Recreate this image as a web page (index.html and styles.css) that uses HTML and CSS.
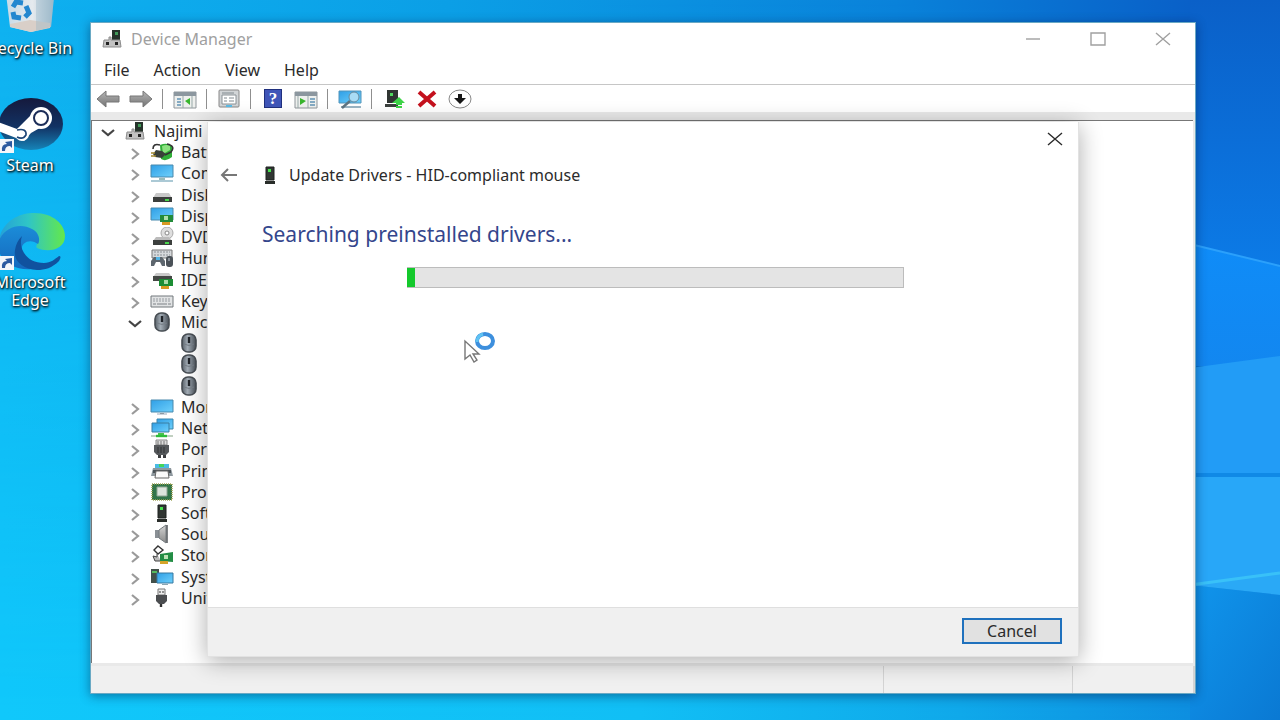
FILE: index.html
```html
<!DOCTYPE html>
<html lang="en">
<head>
<meta charset="utf-8">
<title>Device Manager</title>
<link rel="stylesheet" href="styles.css">
</head>
<body>
<svg class="defs" aria-hidden="true">
  <defs>
    <linearGradient id="gScreen" x1="0" y1="0" x2="1" y2="1"><stop offset="0" stop-color="#2f9fe6"/><stop offset="1" stop-color="#6fd0fb"/></linearGradient>
    <linearGradient id="gMouse" x1="0" x2="1"><stop offset="0" stop-color="#596169"/><stop offset=".4" stop-color="#a3adb6"/><stop offset="1" stop-color="#4a5159"/></linearGradient>
    <linearGradient id="gMetal" x1="0" y1="0" x2="0" y2="1"><stop offset="0" stop-color="#d5d5d5"/><stop offset="1" stop-color="#888"/></linearGradient>
    <linearGradient id="gSteam" x1="0" y1="0" x2="0" y2="1"><stop offset="0" stop-color="#15193c"/><stop offset=".55" stop-color="#123263"/><stop offset="1" stop-color="#1684b8"/></linearGradient>
    <linearGradient id="gEdgeTop" x1="0" y1=".5" x2="1" y2=".5"><stop offset="0" stop-color="#249fd9"/><stop offset=".45" stop-color="#2fc5c6"/><stop offset="1" stop-color="#64e84a"/></linearGradient>
    <linearGradient id="gEdgeMid" x1="0" y1="0" x2="0" y2="1"><stop offset="0" stop-color="#1b8cd8"/><stop offset="1" stop-color="#1568bd"/></linearGradient>
    <linearGradient id="gBin" x1="0" x2="1"><stop offset="0" stop-color="#c5d9e6"/><stop offset=".55" stop-color="#e5eaee"/><stop offset="1" stop-color="#9fb9c9"/></linearGradient>
    <linearGradient id="gArrow" x1="0" y1="0" x2="0" y2="1"><stop offset="0" stop-color="#b5b5b5"/><stop offset="1" stop-color="#747474"/></linearGradient>
  </defs>
  <symbol id="i-pc" viewBox="0 0 24 20"><path d="M12 1h8v10h-8z" fill="#26332b"/><path d="M15 3h3v3h-3z" fill="#3f9a58"/><path d="M4 11h5V8h2v3h9l1 7H3z" fill="#c2c2c2" stroke="#8c8c8c"/><path d="M6 13h3v3H6zM15 13h3v3h-3z" fill="#222"/></symbol>
  <symbol id="i-battery" viewBox="0 0 24 20"><path d="M10 3q7-3 12 1v11q-6 5-11 2z" fill="#2fae37"/><path d="M12 4q5-2 8 0v4l-7 4z" fill="#8be27f"/><path d="M3 7q0-6 7-4M17 2q9 2 4 8l-6 3" fill="none" stroke="#333" stroke-width="1.6"/><path d="M6 8l6 1 4 3-4 4-7-1-2-3z" fill="#39403a"/><path d="M1 11h4M1 14h5" stroke="#a48a32" stroke-width="1.6"/></symbol>
  <symbol id="i-monitor" viewBox="0 0 24 20"><path d="M1 3h22v12H1z" fill="url(#gScreen)" stroke="#4889ad"/><path d="M10 16h4v1h-4z" fill="#888"/><path d="M7 17h10" stroke="#9ab"/></symbol>
  <symbol id="i-computer" viewBox="0 0 24 20"><path d="M1 2h22v12H1z" fill="url(#gScreen)" stroke="#4889ad"/><path d="M9 15h6v2H9z" fill="#9bb"/><path d="M1 18h22" stroke="#8fb7c7" stroke-width="1.5"/></symbol>
  <symbol id="i-disk" viewBox="0 0 24 20"><path d="M6 8h13l3 5H3z" fill="#c9c9c9"/><path d="M3 12h19v5H3z" fill="#3c3f3d"/><path d="M15 15h4" stroke="#48d64c" stroke-width="2"/></symbol>
  <symbol id="i-display" viewBox="0 0 24 20"><path d="M1 2h22v12H1z" fill="url(#gScreen)" stroke="#4889ad"/><path d="M10 9h13v7H10z" fill="#238b3a"/><path d="M14 10h4v4h-4z" fill="#aee0aa"/><path d="M12 16h8v3h-8z" fill="#d89a22"/></symbol>
  <symbol id="i-dvd" viewBox="0 0 24 20"><circle cx="17" cy="6" r="6" fill="#dedede" stroke="#aaa"/><circle cx="17" cy="6" r="2" fill="#fff" stroke="#888"/><path d="M6 10h13l3 4H3z" fill="#bbb"/><path d="M3 13h19v5H3z" fill="#3c3f3d"/><path d="M15 16h4" stroke="#48d64c" stroke-width="2"/></symbol>
  <symbol id="i-hid" viewBox="0 0 24 20"><path d="M2 2h20v8H2z" fill="#d6d9dc" stroke="#777"/><path d="M4 4h16M4 7h16" stroke="#8a8f94" stroke-dasharray="2 1"/><path d="M1 18v-5l3-4h8l3 4v5h-3l-2-4H6l-2 4z" fill="#5d666e"/><path d="M6 9h4v3H6z" fill="#54b5e5"/><rect x="16" y="8" width="7" height="11" rx="3" fill="#4a5158"/><path d="M19 10v3" stroke="#c7d0d8"/></symbol>
  <symbol id="i-ide" viewBox="0 0 24 20"><path d="M6 3h13l3 4H3z" fill="#cacaca"/><path d="M3 6h19v5H3z" fill="#444845"/><path d="M9 9h14v7H9z" fill="#1c8d34"/><path d="M14 10h4v4h-4z" fill="#a9dba6"/><path d="M11 16h8v3h-8z" fill="#d89a22"/></symbol>
  <symbol id="i-keyboard" viewBox="0 0 24 20"><path d="M1 5h22v11H1z" fill="#e1e3e4" stroke="#73787c"/><path d="M3 8h18M3 10h18" stroke="#969ba0" stroke-dasharray="2 1"/><path d="M3 13h3m1 0h10m1 0h3" stroke="#7c8186"/></symbol>
  <symbol id="i-mouse" viewBox="0 0 24 20"><rect x="5" y="1" width="14" height="18" rx="6" fill="url(#gMouse)" stroke="#474d53" stroke-width="1.6"/><path d="M12 4v6" stroke="#1f2328" stroke-width="2.4"/><path d="M7 11q5 3 10 0" fill="none" stroke="#777f87"/></symbol>
  <symbol id="i-network" viewBox="0 0 24 20"><path d="M7 1h16v10H7z" fill="url(#gScreen)" stroke="#3b86ad"/><path d="M2 5h17v9H2z" fill="url(#gScreen)" stroke="#3b7ea3"/><path d="M8 15h6v2H8z" fill="#49c24e"/><path d="M1 18h22" stroke="#c1d0c1" stroke-width="2"/><path d="M6 18h11" stroke="#2dbd39" stroke-width="2.4"/></symbol>
  <symbol id="i-port" viewBox="0 0 24 20"><path d="M6 1h11v5H6z" fill="#ddd" stroke="#888"/><path d="M8 2v4m3-4v4m3-4v4" stroke="#777"/><path d="M4 6h15v7l-3 3H7l-3-3z" fill="#55585b"/><path d="M8 8v6m3-6v6m3-6v6" stroke="#303234"/><path d="M8 16h3v3H8zm5 0h3v3h-3z" fill="#3c3e40"/></symbol>
  <symbol id="i-printer" viewBox="0 0 24 20"><path d="M5 3h14v5H5z" fill="#4bbbe5"/><path d="M9 3h5v3H9z" fill="#43d45b"/><path d="M3 7h18l2 8H1z" fill="#8e989e"/><path d="M3 9h18v3H3z" fill="#4a5257"/><path d="M6 10h12l1 7H5z" fill="#fafafa" stroke="#666"/></symbol>
  <symbol id="i-cpu" viewBox="0 0 24 20"><path d="M2 2h20v16H2z" fill="#2d6e40" stroke="#a0a65a" stroke-width="1.6" stroke-dasharray="1 1"/><path d="M3 3h18v14H3z" fill="#32754a"/><path d="M7 5h10v9H7z" fill="#dce4dc" stroke="#8fa694"/></symbol>
  <symbol id="i-tower" viewBox="0 0 24 20"><path d="M8 2h8v13H8z" fill="#303532" stroke="#1d201e"/><path d="M10 4h3v3h-3z" fill="#45e04c"/><path d="M7 16h10v3H7z" fill="#292d2a"/></symbol>
  <symbol id="i-sound" viewBox="0 0 24 20"><path d="M5 6h4v8H5z" fill="#8a9095"/><path d="M9 6l7-5v18l-7-5z" fill="url(#gMetal)" stroke="#747a7e"/><path d="M17 1v18" stroke="#54595d" stroke-width="1.5"/></symbol>
  <symbol id="i-storage" viewBox="0 0 24 20"><path d="M8 1l5 4-5 4-4-4z" fill="#fff" stroke="#333" stroke-width="1.4"/><path d="M7 9v3l-4-1 2 5h6" fill="#bbb" stroke="#444"/><path d="M10 9l13-2v10l-13-1z" fill="#238d45"/><path d="M14 10h4v4h-4z" fill="#bce2b5"/><path d="M10 16h8v3h-8z" fill="#d5a429"/></symbol>
  <symbol id="i-system" viewBox="0 0 24 20"><path d="M1 2h8v14H1z" fill="#42504a"/><path d="M2 5h5" stroke="#5ddd63" stroke-width="1.5"/><path d="M7 6h16v10H7z" fill="url(#gScreen)" stroke="#3678a0"/><path d="M12 17h6v1h-6z" fill="#8ba5b1"/></symbol>
  <symbol id="i-usb" viewBox="0 0 24 20"><path d="M8 1h7v6H8z" fill="#eee" stroke="#777"/><path d="M10 3v2m3-2v2" stroke="#333"/><path d="M6 7h11v6l-3 3h-5l-3-3z" fill="#4b4d50"/><path d="M11 16v3" stroke="#333" stroke-width="2.4"/></symbol>
  <symbol id="i-right" viewBox="0 0 16 20"><path d="M5 7l6 5-6 5" fill="none" stroke="#9a9a9a" stroke-width="2.2"/></symbol>
  <symbol id="i-down" viewBox="0 0 16 20"><path d="M2 9l6 5 6-5" fill="none" stroke="#444" stroke-width="2.2"/></symbol>
  <symbol id="i-close" viewBox="0 0 16 16"><path d="M1 2l14 12M15 2L1 14" fill="none" stroke="currentColor" stroke-width="1.4"/></symbol>
  <symbol id="i-shortcut" viewBox="0 0 16 16"><path d="M0 1h15v14H0z" fill="#f3f6fa"/><path d="M3 13q-1-7 5-7L6 4l7-1v7l-2-2q-5 0-5 5z" fill="#2b5aa0"/></symbol>
</svg>

<div class="desktop">
  <svg class="wallpaper" viewBox="0 0 1280 720" preserveAspectRatio="none" aria-hidden="true">
    <defs>
      <linearGradient id="wBase" x1="0" x2="1"><stop offset="0" stop-color="#0fb1f0"/><stop offset=".35" stop-color="#0c9fe6"/><stop offset=".7" stop-color="#0a82da"/><stop offset=".93" stop-color="#0a60c8"/><stop offset="1" stop-color="#0a60ca"/></linearGradient>
      <linearGradient id="wLow" x1="0" x2="1"><stop offset="0" stop-color="#10c8fb"/><stop offset=".5" stop-color="#11bff5"/><stop offset=".75" stop-color="#0fa9ea"/><stop offset=".93" stop-color="#0d8fe0"/><stop offset="1" stop-color="#0a78d4"/></linearGradient>
      <linearGradient id="wFade" x1="0" y1="0" x2="0" y2="1"><stop offset="0" stop-color="#000"/><stop offset="1" stop-color="#fff"/></linearGradient>
      <mask id="wMask"><path d="M0 0h1280v720H0z" fill="url(#wFade)"/></mask>
      <linearGradient id="wSky" x1="0" y1="0" x2="0" y2="1"><stop offset="0" stop-color="#0a60c8"/><stop offset="1" stop-color="#0c7ce8"/></linearGradient>
      <linearGradient id="wBeam" x1="0" y1="0" x2="0" y2="1"><stop offset="0" stop-color="#0f8cf8"/><stop offset="1" stop-color="#1287f0"/></linearGradient>
      <linearGradient id="wEnd" x1="0" y1="0" x2="1" y2="1"><stop offset="0" stop-color="#1095ec"/><stop offset="1" stop-color="#0a79d3"/></linearGradient>
    </defs>
    <path d="M0 0h1280v720H0z" fill="url(#wBase)"/>
    <path d="M0 0h1280v720H0z" fill="url(#wLow)" mask="url(#wMask)"/>
    <path d="M1190 0h90v282h-90z" fill="url(#wSky)"/>
    <path d="M1190 244l90 22v100h-90z" fill="url(#wBeam)"/>
    <path d="M1190 244l90 22" stroke="#2ba0fb" stroke-width="2"/>
    <path d="M1190 368l90-12v120h-90z" fill="#229cf6"/>
    <path d="M1190 474h90v112h-90z" fill="#28a7f8"/>
    <path d="M1190 475h90" stroke="#1089e6" stroke-width="4"/>
    <path d="M1190 585l90 10v125h-90z" fill="url(#wEnd)"/>
    <path d="M1190 585l90-12v22z" fill="#2aa9f6"/>
    <path d="M1190 585l90-12" stroke="#39c1f8" stroke-width="3"/>
  </svg>

  <nav class="shortcuts" aria-label="Desktop">
    <a class="shortcut" href="#">
      <svg class="shortcut-icon" viewBox="0 0 72 60"><path d="M10 0h52l-5 50-20 5-21-5z" fill="url(#gBin)"/><path d="M16 47l20-4 20 3v5l-19 4-21-5z" fill="#d9cfc8"/><path d="M42 0h20l-5 50-15 4z" fill="#8fb1c6" opacity=".35"/><g fill="none" stroke="#2387cf" stroke-width="5"><path d="M19 30l3-5 7 1"/><path d="M32 29l3 7-4 4"/><path d="M27 41l-7-1-1-5"/></g></svg>
      <span>Recycle Bin</span>
    </a>
    <a class="shortcut" href="#">
      <svg class="shortcut-icon" viewBox="0 0 72 60"><ellipse cx="37" cy="30" rx="32" ry="26" fill="url(#gSteam)"/><path d="M4 28l19 7 14-14 14 10-14 8-7 8-26-10z" fill="#fff"/><circle cx="47" cy="24" r="11" fill="#fff"/><circle cx="47" cy="24" r="7" fill="#fff" stroke="#1c2d58" stroke-width="2"/><circle cx="28" cy="40" r="7" fill="#fff"/><path d="M23 36q10-2 9 5-3 5-9 2" fill="none" stroke="#1c4476" stroke-width="1.6"/><use href="#i-shortcut" x="5" y="44" width="16" height="16"/></svg>
      <span>Steam</span>
    </a>
    <a class="shortcut" href="#">
      <svg class="shortcut-icon" viewBox="0 0 72 60"><path d="M4 32C8 9 26 2 40 2c20 0 31 12 31 23 0 14-17 17-28 12-2-2 1-4 1-8C44 17 25 10 4 32z" fill="url(#gEdgeTop)"/><path d="M4 32C9 17 25 11 38 18c8 4 8 12 6 15-6-5-17-4-17 8 0 7 4 13 11 17C21 60 3 50 4 32z" fill="url(#gEdgeMid)"/><path d="M28 25c-4 11 3 27 22 27 7 0 11-4 15-7q3 0 0 5c-7 7-14 9-22 9-14-1-24-9-22-20 1-6 3-10 7-14z" fill="#10529f"/><use href="#i-shortcut" x="5" y="44" width="16" height="16"/></svg>
      <span>Microsoft Edge</span>
    </a>
  </nav>

  <main class="window">
    <header class="titlebar">
      <svg class="icon"><use href="#i-pc"/></svg>
      <h1 class="title">Device Manager</h1>
      <button class="caption" aria-label="Minimize"><svg viewBox="0 0 16 16"><path d="M1 8h14" stroke="currentColor" stroke-width="1.4"/></svg></button>
      <button class="caption" aria-label="Maximize"><svg viewBox="0 0 16 16"><path d="M1 2h14v12H1z" fill="none" stroke="currentColor" stroke-width="1.4"/></svg></button>
      <button class="caption" aria-label="Close"><svg><use href="#i-close"/></svg></button>
    </header>
    <nav class="menubar"><button>File</button><button>Action</button><button>View</button><button>Help</button></nav>
    <div class="toolbar" role="toolbar">
      <button aria-label="Back"><svg viewBox="0 0 24 20"><path d="M1 10l9-8v5h13v6H10v5z" fill="url(#gArrow)" stroke="#777"/></svg></button>
      <button aria-label="Forward"><svg viewBox="0 0 24 20"><path d="M23 10l-9-8v5H1v6h13v5z" fill="url(#gArrow)" stroke="#777"/></svg></button>
      <span class="separator"></span>
      <button aria-label="Show console tree"><svg viewBox="0 0 24 20"><path d="M1 3h22v16H1z" fill="#eef0ee" stroke="#8f969b"/><path d="M1 3h22v4H1z" fill="#8c979f"/><path d="M4 10h4M4 13h4M4 16h4" stroke="#6293b5" stroke-width="1.5"/><path d="M10 7v12M19 7v12" stroke="#9aa"/><path d="M17 9v7l-5-4z" fill="#38b52d"/></svg></button>
      <span class="separator"></span>
      <button aria-label="Properties"><svg viewBox="0 0 24 20"><rect x="2" y="1" width="20" height="17" rx="1" fill="#d2d5d7" stroke="#888"/><path d="M5 6h14v9H5z" fill="#fff" stroke="#8b9297"/><path d="M5 4h12M7 9h3m2 0h5M7 12h3m2 0h5" stroke="#818a90"/><path d="M9 17h6" stroke="#5bbbe5" stroke-width="2"/></svg></button>
      <span class="separator"></span>
      <button class="help" aria-label="Help"><b>?</b></button>
      <button aria-label="Show action pane"><svg viewBox="0 0 24 20"><path d="M1 3h22v16H1z" fill="#eef0ee" stroke="#8f969b"/><path d="M1 3h22v4H1z" fill="#8c979f"/><path d="M16 10h5m-5 3h5m-5 3h5" stroke="#6293b5" stroke-width="1.5"/><path d="M4 7v12M14 7v12" stroke="#9aa"/><path d="M6 9v7l6-4z" fill="#38b52d"/></svg></button>
      <span class="separator"></span>
      <button aria-label="Scan for hardware changes"><svg viewBox="0 0 24 20"><path d="M1 2h22v12H1z" fill="url(#gScreen)" stroke="#5294ba"/><path d="M3 18h20" stroke="#9bb5c4" stroke-width="2"/><circle cx="16" cy="8" r="5" fill="#a9dcf5" stroke="#65899d"/><path d="M12 12l-8 7" stroke="#5f7480" stroke-width="2.4"/></svg></button>
      <span class="separator"></span>
      <button aria-label="Update driver"><svg viewBox="0 0 24 20"><path d="M5 1h11v13H5z" fill="#303532"/><path d="M8 4h3v3H8z" fill="#50d85e"/><path d="M3 15h13v3H3z" fill="#3b403d"/><path d="M17 8l6 6h-3v2h-6v-2h-4zM14 17h6v2h-6z" fill="#3ed348"/></svg></button>
      <button aria-label="Uninstall device"><svg viewBox="0 0 24 20"><path d="M4 3l16 14M20 3L4 17" stroke="#c4111d" stroke-width="4"/></svg></button>
      <button aria-label="Disable device"><svg viewBox="0 0 24 20"><ellipse cx="12" cy="10" rx="11" ry="9" fill="#fff" stroke="#888"/><path d="M10 5h4v4h4l-6 6-6-6h4z" fill="#161616"/></svg></button>
    </div>
    <section class="pane">
      <ul class="tree" role="tree">
        <li class="row"><svg class="twist"><use href="#i-down"/></svg><svg class="icon"><use href="#i-pc"/></svg>Najimi</li>
        <li class="row child"><svg class="twist"><use href="#i-right"/></svg><svg class="icon"><use href="#i-battery"/></svg>Batteries</li>
        <li class="row child"><svg class="twist"><use href="#i-right"/></svg><svg class="icon"><use href="#i-computer"/></svg>Computer</li>
        <li class="row child"><svg class="twist"><use href="#i-right"/></svg><svg class="icon"><use href="#i-disk"/></svg>Disk drives</li>
        <li class="row child"><svg class="twist"><use href="#i-right"/></svg><svg class="icon"><use href="#i-display"/></svg>Display adapters</li>
        <li class="row child"><svg class="twist"><use href="#i-right"/></svg><svg class="icon"><use href="#i-dvd"/></svg>DVD/CD-ROM drives</li>
        <li class="row child"><svg class="twist"><use href="#i-right"/></svg><svg class="icon"><use href="#i-hid"/></svg>Human Interface Devices</li>
        <li class="row child"><svg class="twist"><use href="#i-right"/></svg><svg class="icon"><use href="#i-ide"/></svg>IDE ATA/ATAPI controllers</li>
        <li class="row child"><svg class="twist"><use href="#i-right"/></svg><svg class="icon"><use href="#i-keyboard"/></svg>Keyboards</li>
        <li class="row child"><svg class="twist"><use href="#i-down"/></svg><svg class="icon"><use href="#i-mouse"/></svg>Mice and other pointing devices</li>
        <li class="row leaf"><svg class="icon"><use href="#i-mouse"/></svg></li>
        <li class="row leaf"><svg class="icon"><use href="#i-mouse"/></svg></li>
        <li class="row leaf"><svg class="icon"><use href="#i-mouse"/></svg></li>
        <li class="row child"><svg class="twist"><use href="#i-right"/></svg><svg class="icon"><use href="#i-monitor"/></svg>Monitors</li>
        <li class="row child"><svg class="twist"><use href="#i-right"/></svg><svg class="icon"><use href="#i-network"/></svg>Network adapters</li>
        <li class="row child"><svg class="twist"><use href="#i-right"/></svg><svg class="icon"><use href="#i-port"/></svg>Ports (COM &amp; LPT)</li>
        <li class="row child"><svg class="twist"><use href="#i-right"/></svg><svg class="icon"><use href="#i-printer"/></svg>Print queues</li>
        <li class="row child"><svg class="twist"><use href="#i-right"/></svg><svg class="icon"><use href="#i-cpu"/></svg>Processors</li>
        <li class="row child"><svg class="twist"><use href="#i-right"/></svg><svg class="icon"><use href="#i-tower"/></svg>Software devices</li>
        <li class="row child"><svg class="twist"><use href="#i-right"/></svg><svg class="icon"><use href="#i-sound"/></svg>Sound, video and game controllers</li>
        <li class="row child"><svg class="twist"><use href="#i-right"/></svg><svg class="icon"><use href="#i-storage"/></svg>Storage controllers</li>
        <li class="row child"><svg class="twist"><use href="#i-right"/></svg><svg class="icon"><use href="#i-system"/></svg>System devices</li>
        <li class="row child"><svg class="twist"><use href="#i-right"/></svg><svg class="icon"><use href="#i-usb"/></svg>Universal Serial Bus controllers</li>
      </ul>
    </section>
    <footer class="statusbar"><span></span><span></span><span></span></footer>
  </main>

  <section class="dialog" role="dialog" aria-labelledby="dialog-title">
    <div class="dialog-top"><button class="dialog-close" aria-label="Close"><svg><use href="#i-close"/></svg></button></div>
    <header class="dialog-head">
      <button class="back" aria-label="Back"><svg viewBox="0 0 18 14"><path d="M17 7H2M8 1L2 7l6 6" fill="none" stroke="#777" stroke-width="2"/></svg></button>
      <svg class="icon"><use href="#i-tower"/></svg>
      <h2 id="dialog-title">Update Drivers - HID-compliant mouse</h2>
    </header>
    <div class="dialog-body">
      <p class="message" id="message">Searching preinstalled drivers...</p>
      <div class="progress" role="progressbar" aria-labelledby="message"><div class="progress-fill"></div></div>
    </div>
    <footer class="dialog-foot"><button class="cancel">Cancel</button></footer>
  </section>

  <svg class="pointer" viewBox="0 0 34 34" aria-hidden="true"><path d="M2 10v18l5-4 4 7 3-2-4-6h6z" fill="#fff" stroke="#777" stroke-width="1.4"/><ellipse cx="22" cy="10" rx="8" ry="7" fill="#fff" stroke="#3d8fdd" stroke-width="4"/><path d="M14 11q0-6 6-8" fill="none" stroke="#5ec3f3" stroke-width="3"/></svg>
</div>
</body>
</html>
```
FILE: styles.css
```css
* { box-sizing: border-box; }

body {
  margin: 0;
  font: 16px/20px "Noto Sans", "Open Sans", sans-serif;
  color: #2b2b2b;
}

button {
  display: flex;
  align-items: center;
  justify-content: center;
  margin: 0;
  padding: 0;
  border: 0;
  background: none;
  color: inherit;
  font: inherit;
}

h1, h2, p, ul { margin: 0; padding: 0; font-weight: 400; }

.defs { position: absolute; width: 0; height: 0; }

.desktop {
  position: relative;
  height: 100vh;
  overflow: hidden;
  background: #0fb1f0;
}

.wallpaper { position: absolute; inset: 0; width: 100%; height: 100%; }

.shortcuts {
  position: absolute;
  top: -23px;
  left: -20px;
  display: flex;
  flex-direction: column;
  gap: 37px;
  width: 100px;
}

.shortcut {
  display: flex;
  flex-direction: column;
  align-items: center;
  gap: 2px;
  color: #fff;
  line-height: 18px;
  text-align: center;
  text-decoration: none;
  text-shadow: 1px 1px 2px #000, 0 1px 3px #023;
}

.shortcut-icon { width: 72px; height: 60px; }

.icon { flex: none; width: 24px; height: 20px; }

.window {
  position: absolute;
  inset: 22px 84px 26px 90px;
  display: flex;
  flex-direction: column;
  border: 1px solid #6aa9c4;
  background: #fff;
  box-shadow: 0 2px 10px rgba(0, 20, 60, .45);
}

.titlebar { display: flex; align-items: center; height: 32px; padding-left: 9px; color: #a0a0a0; }
.title { flex: 1; padding-left: 7px; font-size: 16px; }
.caption { width: 65px; height: 32px; }
.caption svg, .dialog-close svg { width: 16px; height: 16px; }

.menubar { display: flex; gap: 24px; height: 30px; padding-left: 13px; border-bottom: 1px solid #c6c6c6; }

.toolbar { display: flex; align-items: center; gap: 1px; height: 27px; padding-left: 1px; }
.toolbar button { width: 32px; height: 24px; }
.toolbar svg { width: 24px; height: 20px; }
.separator { width: 1px; height: 20px; margin: 0 5px 0 4px; background: #8f8f8f; }
.toolbar .help b {
  width: 18px;
  height: 19px;
  border: 1px solid #20307e;
  background: #3f55b8;
  color: #fff;
  font: 700 17px/17px "Liberation Serif", serif;
}

.pane {
  flex: 1;
  display: flex;
  flex-direction: column;
  min-height: 0;
  border: solid #e9e9e9;
  border-width: 8px 2px 3px 0;
}

.tree {
  flex: 1;
  display: flex;
  flex-direction: column;
  justify-content: space-between;
  padding: 0 0 55px 8px;
  border-top: 1px solid #777;
  border-left: 1px solid #777;
  overflow: hidden;
  list-style: none;
}

.row {
  display: flex;
  align-items: center;
  gap: 7px;
  width: 108px;
  height: 20px;
  overflow: hidden;
  white-space: nowrap;
}
.child { padding-left: 27px; }
.leaf { padding-left: 77px; }
.twist { flex: none; width: 16px; height: 20px; }

.statusbar {
  display: grid;
  grid-template-columns: 1fr 189px 122px;
  height: 27px;
  background: #f0f0f0;
}
.statusbar span { border-right: 1px solid #d4d4d4; }
.statusbar span:last-child { border-right-width: 2px; }

.dialog {
  position: absolute;
  inset: 122px 201px 63px 207px;
  display: flex;
  flex-direction: column;
  background: #fff;
  border: 1px solid #e2e2e2;
  border-top: 0;
  box-shadow: 0 4px 22px rgba(0, 0, 0, .32);
}

.dialog-top { display: flex; justify-content: flex-end; height: 34px; }
.dialog-close { width: 46px; }

.dialog-head { display: flex; align-items: center; height: 38px; padding-left: 12px; }
.dialog-head h2 { padding-left: 7px; font-size: 16px; }
.back { width: 18px; margin-right: 20px; }
.back svg { width: 18px; height: 14px; }

.dialog-body { flex: 1; padding: 26px 174px 0 54px; }
.message { color: #34468c; font-size: 21px; line-height: 28px; }

.progress {
  height: 21px;
  margin: 19px 0 0 145px;
  border: solid #bcbcbc;
  border-width: 1px 1px 1px 0;
  background: #e4e4e4;
}
.progress-fill { width: 8px; height: 100%; background: #14c92c; }

.dialog-foot {
  display: flex;
  justify-content: flex-end;
  padding: 10px 16px 12px;
  border-top: 1px solid #dfdfdf;
  background: #f0f0f0;
}
.cancel { width: 100px; height: 26px; border: 2px solid #1f71bd; background: #e1e1e1; }

.pointer { position: absolute; top: 331px; left: 463px; width: 34px; height: 34px; }
```
